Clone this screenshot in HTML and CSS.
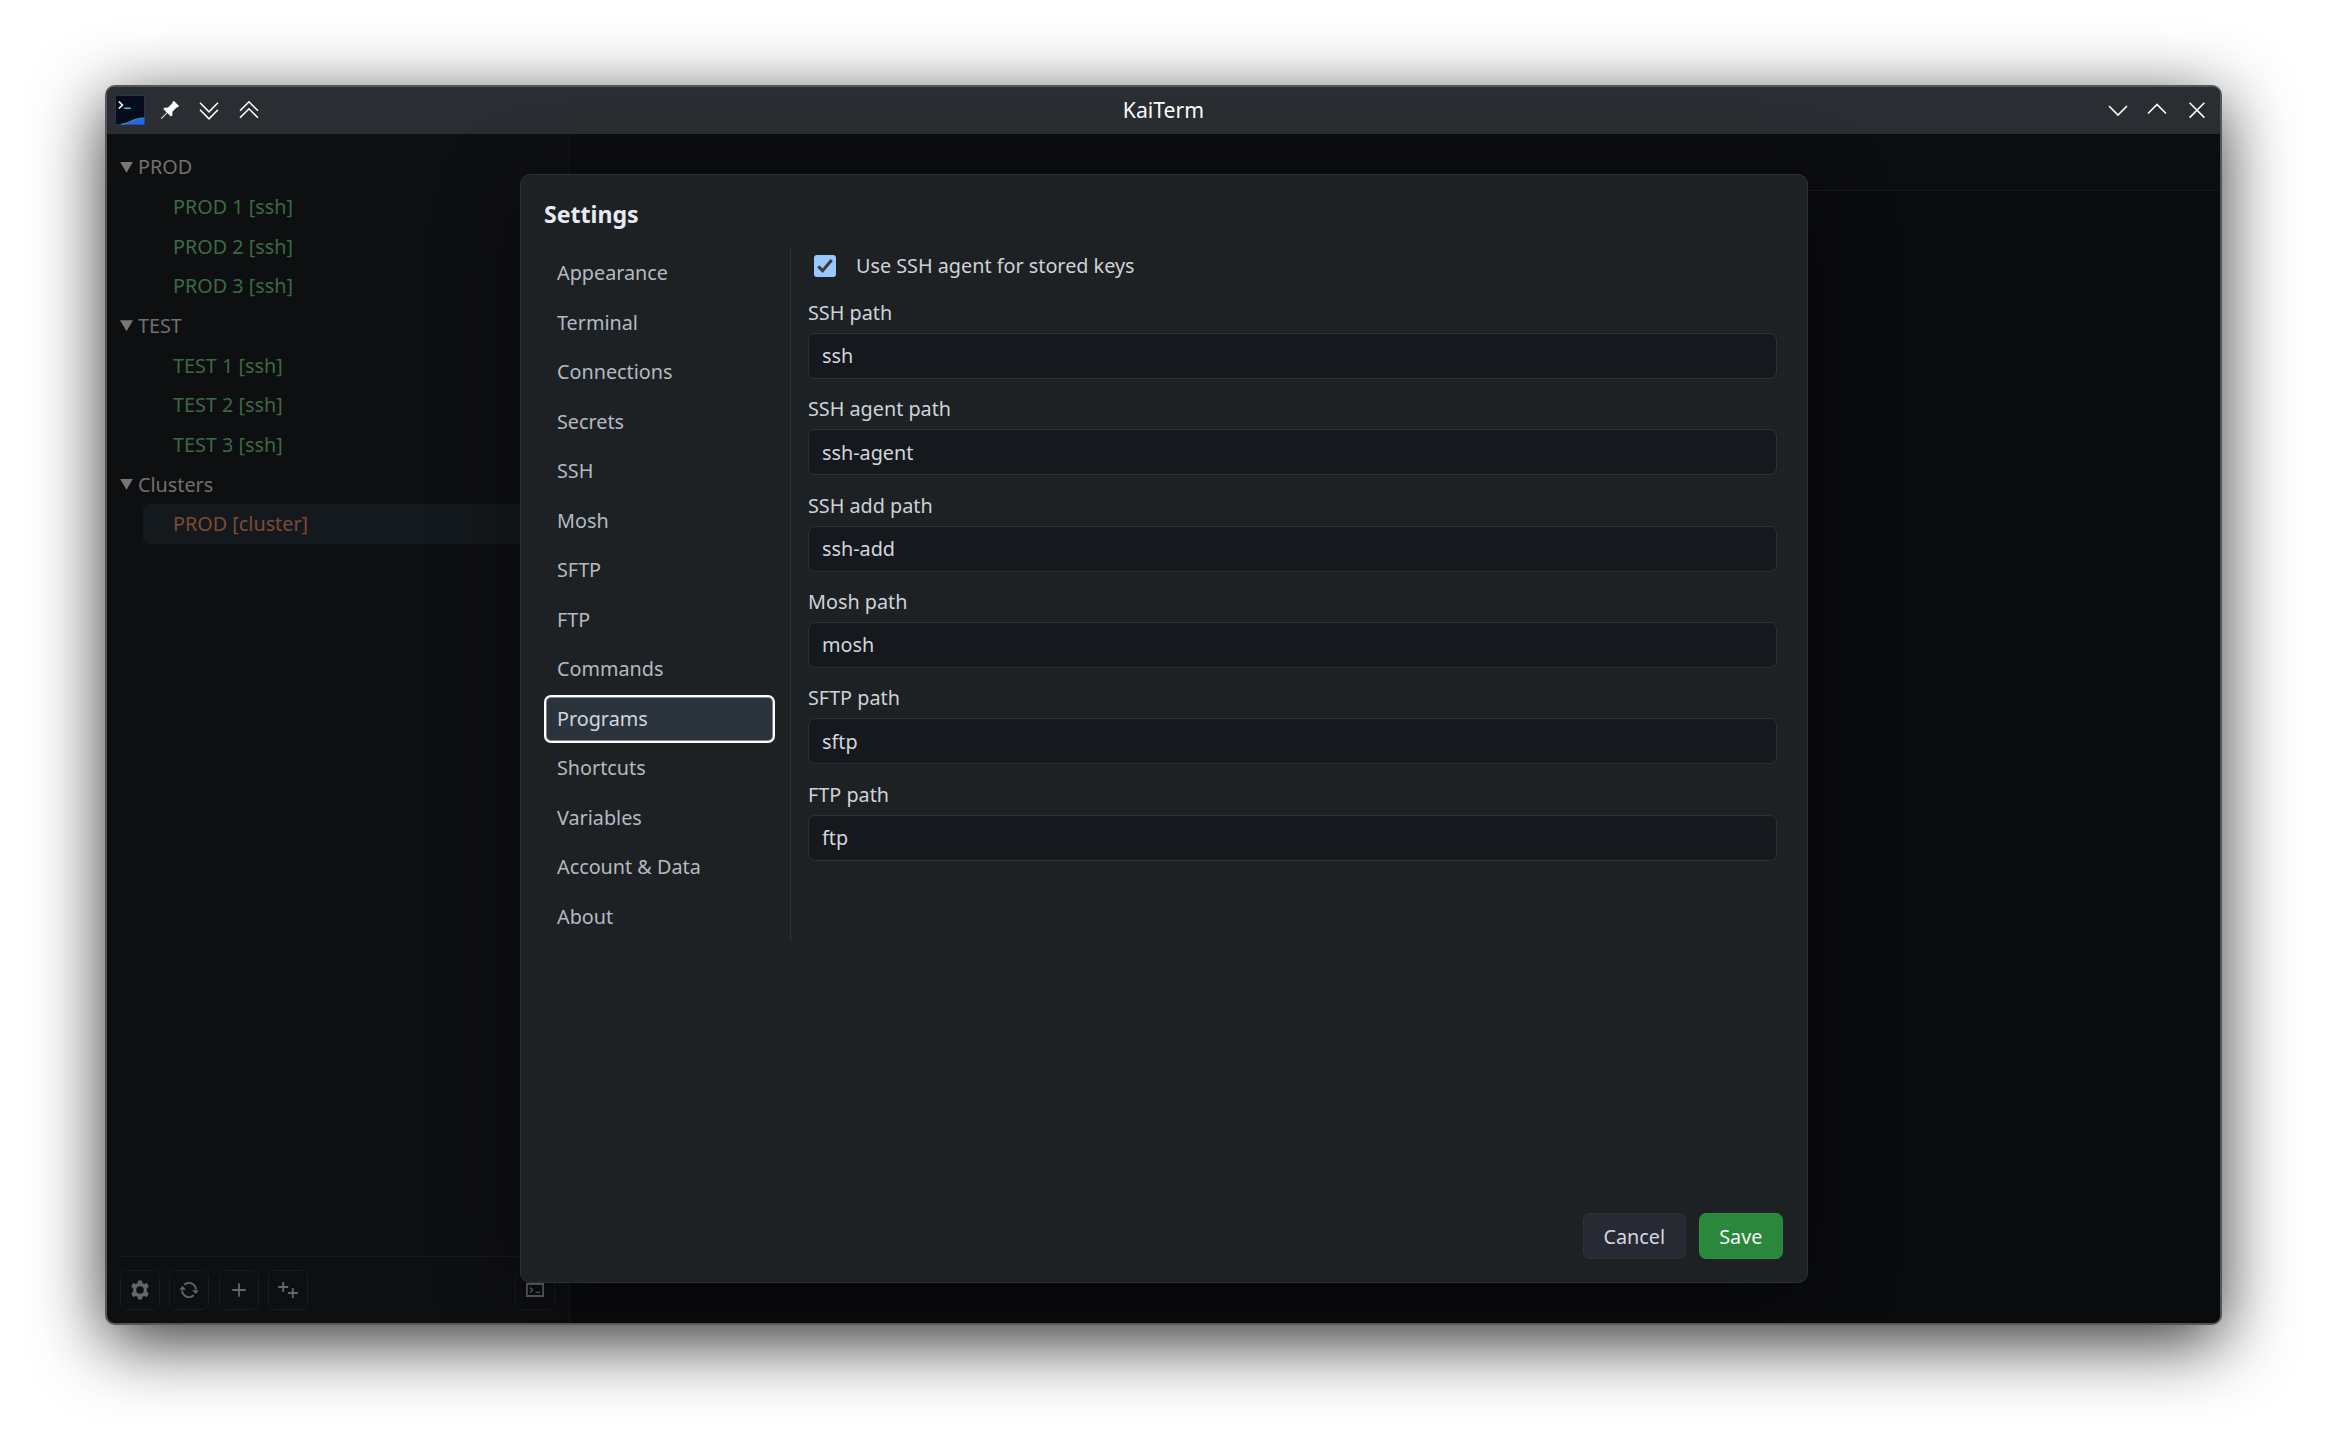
FILE: index.html
```html
<!DOCTYPE html>
<html lang="en">
<head>
    <meta charset="UTF-8">
    <meta name="viewport" content="width=device-width, initial-scale=1.0">
    <title>KaiTerm</title>
    <link rel="stylesheet" href="styles.css">
</head>
<body>
<div class="window">
    <header class="titlebar">
        <div class="title-group">
            <svg class="app-icon" viewBox="0 0 30 30">
                <rect x="0.5" y="0.5" width="29" height="29" rx="1.5" fill="#050b1c" stroke="#26344f"/>
                <path d="M6 29.5C15 29 19 22.5 29.5 23V29.5Z" fill="#2466e8"/>
                <path d="M6 29.3C15 28.7 19 22.5 29.5 23" fill="none" stroke="#1fa5c4" stroke-width="1.2"/>
                <path d="M3.8 6.5L7.4 10L3.8 13.5" fill="none" stroke="#f4f6fa" stroke-width="1.7"/>
                <path d="M9.3 13.2H15.7" stroke="#3fd0bd" stroke-width="1.4"/>
            </svg>
            <svg class="title-icon" viewBox="0 0 20 20">
                <path d="M13.8 0.8L19 6L17.5 7.5L16.8 7.3L12.4 11.8L12.3 15.5L10.9 16.6L7.3 13.1L1.7 18.8L0.9 18.9L1.1 18L6.7 12.4L3.3 9L4.4 7.7L8 7.6L12.5 3L12.3 2.3Z" fill="#fcfcfc"/>
            </svg>
            <svg class="title-icon" viewBox="0 0 20 20">
                <path d="M1 2.8L10 11.8L19 2.8M1 9.8L10 18.8L19 9.8" fill="none" stroke="#fcfcfc" stroke-width="1.6"/>
            </svg>
            <svg class="title-icon" viewBox="0 0 20 20">
                <path d="M1 10.8L10 1.8L19 10.8M1 17.8L10 8.8L19 17.8" fill="none" stroke="#fcfcfc" stroke-width="1.6"/>
            </svg>
        </div>
        <div class="title">KaiTerm</div>
        <div class="title-group title-right">
            <svg class="title-icon" viewBox="0 0 20 20">
                <path d="M1 6L10 15L19 6" fill="none" stroke="#fcfcfc" stroke-width="1.6"/>
            </svg>
            <svg class="title-icon" viewBox="0 0 20 20">
                <path d="M1 13.5L10 4.5L19 13.5" fill="none" stroke="#fcfcfc" stroke-width="1.6"/>
            </svg>
            <svg class="title-icon" viewBox="0 0 20 20">
                <path d="M2.6 2.8L17.4 17.6M17.4 2.8L2.6 17.6" fill="none" stroke="#fcfcfc" stroke-width="1.6"/>
            </svg>
        </div>
    </header>

    <div class="content">
        <aside class="sidebar">
            <div class="tree">
                <div class="group"><span class="arrow"></span>PROD</div>
                <div class="item">PROD 1 [ssh]</div>
                <div class="item">PROD 2 [ssh]</div>
                <div class="item">PROD 3 [ssh]</div>
                <div class="group"><span class="arrow"></span>TEST</div>
                <div class="item">TEST 1 [ssh]</div>
                <div class="item">TEST 2 [ssh]</div>
                <div class="item">TEST 3 [ssh]</div>
                <div class="group"><span class="arrow"></span>Clusters</div>
                <div class="item cluster">PROD [cluster]</div>
            </div>
            <div class="toolbar">
                <button class="tool">
                    <svg viewBox="0 0 20 20">
                        <path fill="#64676a" fill-rule="evenodd" d="M8 0.5H12L12.5 3.2L14.2 4.1L16.8 3.1L18.8 6.6L16.8 8.4V11.6L18.8 13.4L16.8 16.9L14.2 15.9L12.5 16.8L12 19.5H8L7.5 16.8L5.8 15.9L3.2 16.9L1.2 13.4L3.2 11.6V8.4L1.2 6.6L3.2 3.1L5.8 4.1L7.5 3.2ZM10 6.2A3.8 3.8 0 1 0 10 13.8A3.8 3.8 0 1 0 10 6.2Z"/>
                    </svg>
                </button>
                <button class="tool">
                    <svg viewBox="0 0 20 20">
                        <path d="M5.3 4.7A7 7 0 0 1 16.9 9.5M14.7 15.3A7 7 0 0 1 3.1 10.5" fill="none" stroke="#64676a" stroke-width="1.9"/>
                        <path d="M13.1 10.2H19.7L16.6 14ZM0.4 9.8H6.9L3.4 6Z" fill="#64676a"/>
                    </svg>
                </button>
                <button class="tool">
                    <svg viewBox="0 0 20 20">
                        <path d="M10 3.3V16.7M3.3 10H16.7" stroke="#64676a" stroke-width="1.8"/>
                    </svg>
                </button>
                <button class="tool">
                    <svg viewBox="0 0 20 20">
                        <path d="M5.2 2V12M0.2 7H10.2M14.8 8V18M9.8 13H19.8" stroke="#64676a" stroke-width="1.8"/>
                    </svg>
                </button>
                <button class="tool tool-last">
                    <svg viewBox="0 0 20 20">
                        <path d="M1.9 4H18.1V16H1.9Z" fill="none" stroke="#5d6063" stroke-width="1.8"/>
                        <path d="M5 7.5L7.5 10L5 12.5M10.8 12.4H15" fill="none" stroke="#5d6063" stroke-width="1.4"/>
                    </svg>
                </button>
            </div>
        </aside>
        <main class="main">
            <div class="tabs"></div>
        </main>

        <div class="modal">
            <h2>Settings</h2>
            <div class="settings">
                <nav class="nav">
                    <div class="nav-item">Appearance</div>
                    <div class="nav-item">Terminal</div>
                    <div class="nav-item">Connections</div>
                    <div class="nav-item">Secrets</div>
                    <div class="nav-item">SSH</div>
                    <div class="nav-item">Mosh</div>
                    <div class="nav-item">SFTP</div>
                    <div class="nav-item">FTP</div>
                    <div class="nav-item">Commands</div>
                    <div class="nav-item active">Programs</div>
                    <div class="nav-item">Shortcuts</div>
                    <div class="nav-item">Variables</div>
                    <div class="nav-item">Account &amp; Data</div>
                    <div class="nav-item">About</div>
                </nav>
                <form class="form">
                    <div class="check-row">
                        <svg class="checkbox" viewBox="0 0 22 22">
                            <rect width="22" height="22" rx="3" fill="#99c8ff"/>
                            <path d="M4.3 11.4L8.6 15.8L17.7 5" fill="none" stroke="#3b3b3b" stroke-width="3"/>
                        </svg>
                        <span>Use SSH agent for stored keys</span>
                    </div>
                    <label class="field">SSH path<input type="text" value="ssh"></label>
                    <label class="field">SSH agent path<input type="text" value="ssh-agent"></label>
                    <label class="field">SSH add path<input type="text" value="ssh-add"></label>
                    <label class="field">Mosh path<input type="text" value="mosh"></label>
                    <label class="field">SFTP path<input type="text" value="sftp"></label>
                    <label class="field">FTP path<input type="text" value="ftp"></label>
                </form>
            </div>
            <div class="actions">
                <button class="btn">Cancel</button>
                <button class="btn save">Save</button>
            </div>
        </div>
    </div>
</div>
</body>
</html>
```

FILE: styles.css
```css
* {
    box-sizing: border-box;
}
body {
    margin: 0;
    height: 1450px;
    padding: 85px 105px 125px;
    background-color: #ffffff;
    font-family: "Noto Sans", sans-serif;
    font-size: 19.8px;
    overflow: hidden;
}
button, input {
    font: inherit;
}
.window {
    height: 1240px;
    border: 2px solid #54575a;
    border-radius: 10px;
    overflow: hidden;
    background-color: #0e0f11;
    display: flex;
    flex-direction: column;
    box-shadow: 0 17px 70px rgba(0, 0, 0, 0.8);
}

/* Title bar */
.titlebar {
    height: 47px;
    background-color: #2a2d31;
    color: #fcfcfc;
    display: grid;
    grid-template-columns: 1fr auto 1fr;
    align-items: center;
    padding: 0 13px 1px 8px;
}
.title-group {
    display: flex;
    align-items: center;
    gap: 19.7px;
}
.title-right {
    justify-content: flex-end;
}
.app-icon {
    width: 30px;
    height: 30px;
    margin-right: -5px;
}
.title-icon {
    width: 20px;
    height: 20px;
}
.title {
    font-size: 21.2px;
    line-height: 29px;
    padding: 0 0 1px 5px;
}

/* Sidebar */
.content {
    flex: 1;
    display: flex;
    position: relative;
}
.sidebar {
    width: 463px;
    border-right: 1px solid #17191b;
    padding: 13.4px 14px 13px 13px;
    display: flex;
    flex-direction: column;
    justify-content: space-between;
}
.group, .item {
    height: 39.65px;
    line-height: 39.6px;
    color: #707070;
}
.group {
    display: flex;
    align-items: center;
}
.arrow {
    width: 13px;
    height: 11px;
    margin-right: 5px;
    background-color: #777777;
    clip-path: polygon(0 0, 100% 0, 50% 100%);
}
.item {
    margin-left: 23px;
    padding-left: 30px;
    color: #3a6a45;
    border-radius: 6px;
}
.cluster {
    color: #7d4a34;
    background-color: #14191d;
}
.toolbar {
    display: flex;
    gap: 9.9px;
    padding-top: 13px;
    border-top: 1px solid #18191b;
}
.tool {
    width: 39.6px;
    height: 40px;
    padding: 0;
    background: none;
    border: 1px solid #191b1d;
    border-radius: 7px;
    display: flex;
    align-items: center;
    justify-content: center;
}
.tool svg {
    width: 20px;
    height: 20px;
}
.tool-last {
    margin-left: auto;
}
.main {
    flex: 1;
    background-color: #0a0b0d;
}
.tabs {
    height: 57px;
    background-color: #0c0d0f;
    border-bottom: 1px solid #17181a;
}

/* Settings dialog */
.modal {
    position: absolute;
    top: 40px;
    left: 413px;
    width: 1288px;
    height: 1109px;
    padding: 23px;
    background-color: #1d2124;
    border: 1px solid #2b3036;
    border-radius: 10px;
    color: #ced3da;
    display: flex;
    flex-direction: column;
    box-shadow: 0 17px 83px rgba(0, 0, 0, 0.45);
}
.modal h2 {
    margin: 0;
    font-size: 23.1px;
    line-height: 32px;
    color: #e6eaf2;
}
.settings {
    display: flex;
    padding-top: 19px;
    flex: 1;
}
.nav {
    width: 247px;
    height: 692px;
    padding: 1px 16px 0 1px;
    border-right: 1px solid #2d3236;
    display: flex;
    flex-direction: column;
    gap: 3.4px;
}
.nav-item {
    height: 46.15px;
    line-height: 46px;
    padding-left: 12px;
    border-radius: 6px;
    color: #b4bac2;
}
.nav-item.active {
    background-color: #2b343c;
    color: #d0d6df;
    outline: 2px solid #ffffff;
    outline-offset: -1px;
    box-shadow: inset 0 0 0 2px #7f868c;
}
.form {
    flex: 1;
    padding: 3px 7px 0 17px;
}
.check-row {
    display: flex;
    align-items: center;
    height: 27px;
    margin-bottom: 19.8px;
    padding-left: 6px;
    gap: 20px;
}
.checkbox {
    width: 22px;
    height: 22px;
}
.field {
    display: block;
    line-height: 27px;
    margin-bottom: 16.4px;
}
.field input {
    display: block;
    width: 100%;
    height: 46px;
    margin-top: 7px;
    padding: 0 13px;
    background-color: #15181c;
    color: #d3d7dd;
    border: 1px solid #2d3135;
    border-radius: 7px;
}
.actions {
    display: flex;
    justify-content: flex-end;
    gap: 13px;
    padding-right: 1px;
}
.btn {
    height: 46px;
    padding: 0 19.6px;
    border: 1px solid #30343a;
    border-radius: 7px;
    background-color: #272a32;
    color: #d4d8e0;
}
.save {
    background-color: #2a873b;
    border-color: #2f8f41;
    color: #f2f5f3;
}
```
